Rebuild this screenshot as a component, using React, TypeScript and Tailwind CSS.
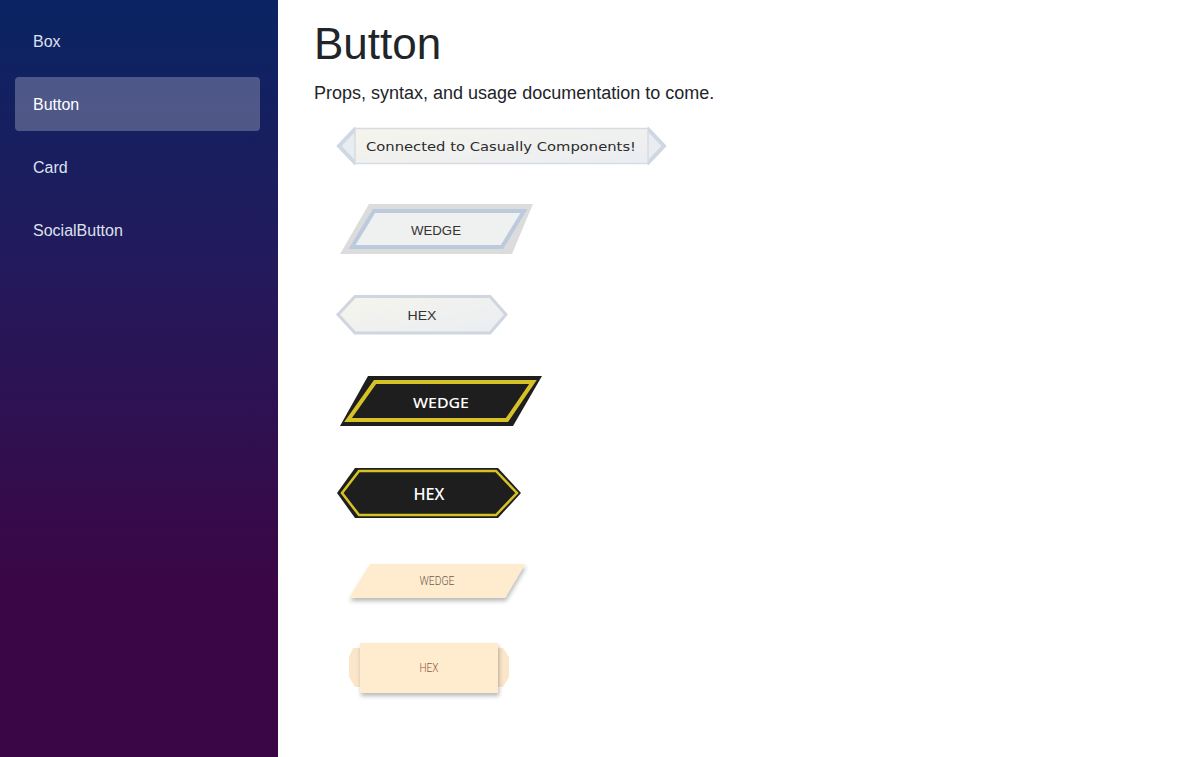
import React from 'react'

const navItems = ['Box', 'Button', 'Card', 'SocialButton']

function Shadow({ id }: { id: string }) {
    return (
        <defs>
            <filter id={id} x="-20%" y="-30%" width="140%" height="180%">
                <feDropShadow dx="1" dy="3" stdDeviation="2" floodColor="#000" floodOpacity="0.28" />
            </filter>
        </defs>
    )
}

function LightGradient({ id }: { id: string }) {
    return (
        <defs>
            <linearGradient id={id} x1="0" y1="0" x2="1" y2="1">
                <stop offset="0%" stopColor="#f5f5ec" />
                <stop offset="100%" stopColor="#eaedf2" />
            </linearGradient>
        </defs>
    )
}

export default function App() {
    return (
        <div className="flex min-h-[757px] w-full font-['Liberation_Sans',Arial,sans-serif]">
            {/* Sidebar */}
            <aside className="w-[278px] shrink-0 bg-[linear-gradient(180deg,#0a2463_0%,#231a5c_35%,#3b0645_78%,#3b0645_100%)] pl-[15px] pr-[18px] pt-[14px]">
                <nav className="flex flex-col gap-[9px]">
                    {navItems.map((item) => (
                        <a
                            key={item}
                            href="#"
                            className={
                                item === 'Button'
                                    ? 'flex h-[54px] items-center rounded-[4px] bg-white/25 px-[18px] pt-[2px] text-[16px] text-white'
                                    : 'flex h-[54px] items-center rounded-[4px] px-[18px] pt-[2px] text-[16px] text-[#dde1ee]'
                            }
                        >
                            {item}
                        </a>
                    ))}
                </nav>
            </aside>

            {/* Content */}
            <main className="flex flex-1 flex-col bg-white pl-[36px] text-[#212529]">
                <h1 className="mt-[18px] text-[44px] leading-[1.2] font-normal">Button</h1>
                <p className="mt-[9px] text-[18px] leading-[27px]">Props, syntax, and usage documentation to come.</p>

                {/* Banner */}
                <svg className="ml-[21px] mt-[19px]" width="332" height="40" viewBox="0 0 332 40">
                    <LightGradient id="g1" />
                    <polyline points="21,2 4,20 21,38" fill="#e9edf2" stroke="#cfd7e2" strokeWidth="4" strokeLinejoin="miter" />
                    <polyline points="312,2 329,20 312,38" fill="#e9edf2" stroke="#cfd7e2" strokeWidth="4" strokeLinejoin="miter" />
                    <rect x="20" y="2.5" width="293" height="35" fill="url(#g1)" stroke="#d8dbe1" strokeWidth="1.5" />
                    <text x="166" y="20.5" textAnchor="middle" dominantBaseline="central" fontFamily="DejaVu Sans, sans-serif" fontSize="13" fill="#2b2b2b" textLength="270" lengthAdjust="spacingAndGlyphs">
                        Connected to Casually Components!
                    </text>
                </svg>

                {/* Light wedge */}
                <svg className="ml-[24px] mt-[36px]" width="198" height="54" viewBox="0 0 198 54">
                    <polygon points="31,2 195,2 174,52 2,52" fill="#dcdcdc" />
                    <polygon points="36,9 186,9 164,45 14,45" fill="#eff0f0" stroke="#bccade" strokeWidth="4" />
                    <text x="98" y="28" textAnchor="middle" dominantBaseline="central" fontFamily="Liberation Sans, Arial, sans-serif" fontSize="13" fill="#333" textLength="50" lengthAdjust="spacingAndGlyphs">
                        WEDGE
                    </text>
                </svg>

                {/* Light hex */}
                <svg className="ml-[21px] mt-[37px]" width="175" height="44" viewBox="0 0 175 44">
                    <LightGradient id="g2" />
                    <polygon points="3,21.5 20,3.5 155,3.5 171,21.5 155,40 20,40" fill="url(#g2)" stroke="#cfd6df" strokeWidth="3" />
                    <text x="87" y="22" textAnchor="middle" dominantBaseline="central" fontFamily="Liberation Sans, Arial, sans-serif" fontSize="13" fill="#333" textLength="29" lengthAdjust="spacingAndGlyphs">
                        HEX
                    </text>
                </svg>

                {/* Dark wedge */}
                <svg className="ml-[24px] mt-[36px]" width="208" height="56" viewBox="0 0 208 56">
                    <polygon points="30,3 204,3 175,53 2,53" fill="#1e1e1e" />
                    <polygon points="37,9 195,9 169,47 10,47" fill="none" stroke="#d6c227" strokeWidth="4" />
                    <text x="103" y="29" textAnchor="middle" dominantBaseline="central" fontFamily="Noto Sans, sans-serif" fontWeight="500" fontSize="15" fill="#ffffff" textLength="56" lengthAdjust="spacingAndGlyphs">
                        WEDGE
                    </text>
                </svg>

                {/* Dark hex */}
                <svg className="ml-[21px] mt-[36px]" width="190" height="57" viewBox="0 0 190 57">
                    <polygon points="2,28 20,3 163,3 186,28 163,53 20,53" fill="#1e1e1e" />
                    <polygon points="7,28 24,6 161,6 182,28 161,50 24,50" fill="none" stroke="#d6c227" strokeWidth="2.5" />
                    <text x="94" y="28.5" textAnchor="middle" dominantBaseline="central" fontFamily="Noto Sans, sans-serif" fontWeight="500" fontSize="16" fill="#ffffff" textLength="31" lengthAdjust="spacingAndGlyphs">
                        HEX
                    </text>
                </svg>

                {/* Peach wedge */}
                <svg className="ml-[31px] mt-[38px]" width="185" height="46" viewBox="0 0 185 46">
                    <Shadow id="s1" />
                    <polygon points="25,4 180,4 160,38 4,38" fill="#ffebcd" filter="url(#s1)" />
                    <text x="92" y="21" textAnchor="middle" dominantBaseline="central" fontFamily="Roboto, sans-serif" fontWeight="300" fontSize="12" fill="#6f5c53" textLength="35" lengthAdjust="spacingAndGlyphs">
                        WEDGE
                    </text>
                </svg>

                {/* Peach hex */}
                <svg className="ml-[31px] mt-[32px]" width="170" height="62" viewBox="0 0 170 62">
                    <Shadow id="s2" />
                    <polygon points="8,10 4,19 4,39 10,49 16,49 16,10" fill="#fbe6c9" />
                    <polygon points="152,10 158,10 164,19 164,39 158,49 152,49" fill="#fbe6c9" />
                    <rect x="15" y="5" width="138" height="50" fill="#ffebcd" filter="url(#s2)" />
                    <text x="84" y="30" textAnchor="middle" dominantBaseline="central" fontFamily="Roboto, sans-serif" fontWeight="300" fontSize="12" fill="#8a5a3c" textLength="19" lengthAdjust="spacingAndGlyphs">
                        HEX
                    </text>
                </svg>
            </main>
        </div>
    )
}
